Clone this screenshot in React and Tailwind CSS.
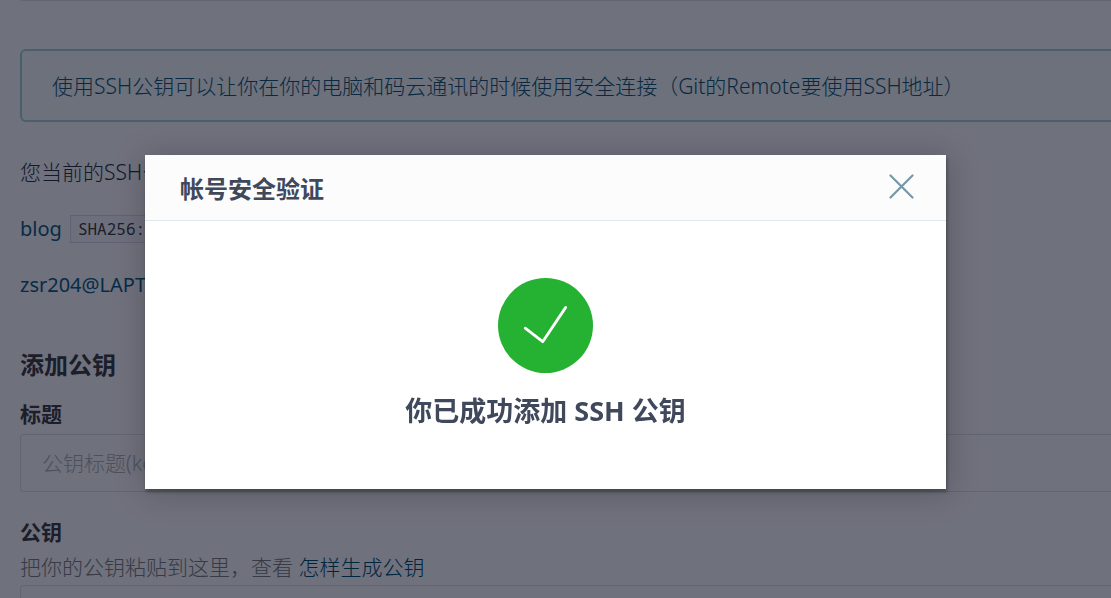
const sans = "font-['Noto_Sans','Noto_Sans_CJK_SC',sans-serif]";

function InfoMessage({ children }) {
  return (
    <p className="mt-12 rounded-l-md border-2 border-r-0 border-[#a9d5de] bg-[#f8ffff] px-[30px] pt-[21px] pb-5 text-[#145a75]">
      {children}
    </p>
  );
}

function KeyRow({ name, fingerprint }) {
  return (
    <li className="flex items-center gap-2 whitespace-nowrap">
      <a href="#key" className="text-xl leading-7 font-normal text-[#0f6288]">{name}</a>
      {fingerprint && (
        <code className="border border-[#dcddea] bg-[#fbfbff] px-[7px] font-['Noto_Sans_Mono','DejaVu_Sans_Mono',monospace] text-base leading-[26px] font-normal text-[#404143]">
          {fingerprint}
        </code>
      )}
    </li>
  );
}

function KeysPage() {
  return (
    <main className="pl-5 text-[21px] leading-7 font-light text-[#2c3447]">
      <hr className="border-[#e6e6ea]" />
      <InfoMessage>
        使用SSH公钥可以让你在你的电脑和码云通讯的时候使用安全连接（Git的Remote要使用SSH地址）
      </InfoMessage>
      <p className="mt-9">您当前的SSH公</p>
      <ul className="mt-[29px] flex flex-col gap-7">
        <KeyRow name="blog" fingerprint="SHA256:" />
        <KeyRow name="zsr204@LAPT" />
      </ul>
      <h3 className="mt-[52px] text-2xl leading-7 font-bold text-[#404143]">添加公钥</h3>
      <form className="mt-[21px] flex flex-col">
        <label htmlFor="title" className="font-bold text-[#404143]">标题</label>
        <input
          id="title"
          placeholder="公钥标题(key)"
          className="mt-[6px] h-[58px] rounded-l border border-r-0 border-[#dfe2ea] px-[21px] font-light placeholder:text-[#b4b4b4]"
        />
        <label htmlFor="key" className="mt-[26px] font-bold text-[#404143]">公钥</label>
        <p className="mt-[7px] text-[#808080]">
          把你的公钥粘贴到这里，查看 <a href="#help" className="text-[#005073]">怎样生成公钥</a>
        </p>
        <textarea id="key" rows="6" className="mt-1 rounded-l border border-r-0 border-[#dfe2ea]" />
      </form>
    </main>
  );
}

function SuccessDialog() {
  return (
    <div className="fixed inset-0 flex items-start justify-center bg-[rgba(0,3,23,0.565)] pt-[155px] pr-5">
      <section
        role="dialog"
        aria-modal="true"
        aria-labelledby="dialog-title"
        className="w-full max-w-[801px] bg-white text-[#40485b] shadow-[1px_3px_3px_0_rgba(0,0,0,0.3),1px_3px_30px_2px_rgba(0,0,0,0.2)]"
      >
        <header className="flex items-start justify-between border-b border-[#e1e8ee] bg-[#fcfcfc] px-8 pt-4 pb-[13px]">
          <h2 id="dialog-title" className="pl-[3px] text-2xl leading-9 font-bold">帐号安全验证</h2>
          <button type="button" aria-label="关闭" className="mt-[3px] cursor-pointer text-[#7897a5]">
            <svg viewBox="0 0 25 25" className="size-[25px]" fill="none" stroke="currentColor" strokeWidth="2.2" strokeLinecap="round">
              <path d="M1.5 1.5L23.5 23.5M23.5 1.5L1.5 23.5" />
            </svg>
          </button>
        </header>
        <div className="flex flex-col items-center pt-[57px] pb-[60px]">
          <svg viewBox="0 0 95 95" className="size-[95px]" fill="none">
            <circle cx="47.5" cy="47.5" r="47.5" fill="#25b131" />
            <path d="M27.2 50.2L44.7 63.7L67.7 29.4" stroke="white" strokeWidth="2.8" strokeLinecap="round" strokeLinejoin="round" />
          </svg>
          <p className="mt-5 text-[27px] leading-9 font-bold">你已成功添加 SSH 公钥</p>
        </div>
      </section>
    </div>
  );
}

export default function App() {
  return (
    <div className={`${sans} h-screen overflow-hidden bg-white`}>
      <KeysPage />
      <SuccessDialog />
    </div>
  );
}
